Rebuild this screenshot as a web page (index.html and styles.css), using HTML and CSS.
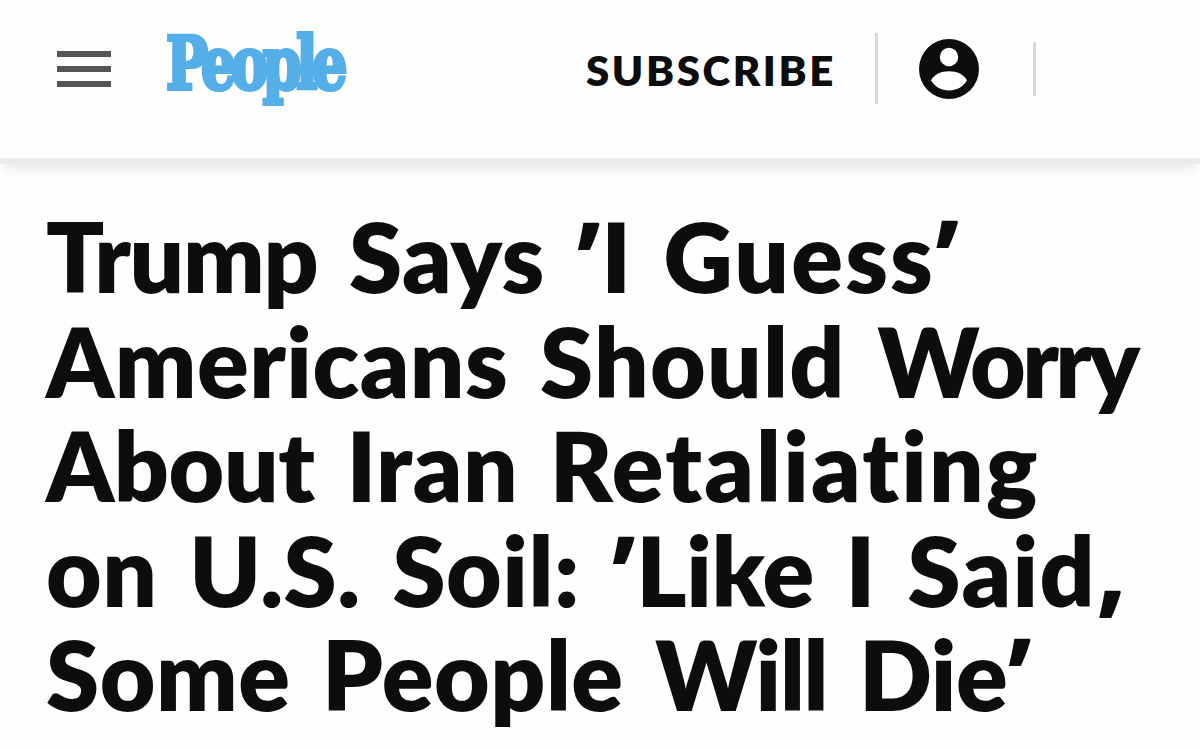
FILE: index.html
```html
<!DOCTYPE html>
<html lang="en">
<head>
  <meta charset="UTF-8">
  <title>People</title>
  <link rel="stylesheet" href="styles.css">
</head>
<body>

  <header class="header">
    <button class="menu" aria-label="Menu">
      <span></span>
      <span></span>
      <span></span>
    </button>
    <a class="logo" href="#">
      <svg width="200" height="110" viewBox="0 0 200 110">
        <text x="3" y="61" textLength="176" lengthAdjust="spacingAndGlyphs">People</text>
      </svg>
    </a>
    <a class="subscribe" href="#">SUBSCRIBE</a>
    <div class="divider"></div>
    <a class="account" href="#" aria-label="Account">
      <svg width="60" height="60" viewBox="0 0 60 60">
        <circle cx="30" cy="30" r="30" fill="#0d0d0d"/>
        <circle cx="30" cy="18" r="9.2" fill="#fff"/>
        <path d="M12 41.5C15 35.5 22 32.3 30 32.3S45 35.5 48 41.5C44 48 37.500 51.500 30 51.500S16 48 12 41.500Z" fill="#fff"/>
      </svg>
    </a>
    <div class="divider short"></div>
  </header>

  <main>
    <h1>
      <span class="line"><span class="tight">Trump</span> Says <i>’</i>I <span class="wider">Guess</span><i>’</i></span>
      <span class="line">Americans <span class="wide">Should</span> <span class="tighter">Worry</span></span>
      <span class="line"><span class="snug">About</span> Iran <span class="wider">Retaliating</span></span>
      <span class="line">on U.S. Soil: <i>’</i><span class="snug">Like</span> I <span class="wide">Said</span><i>,</i></span>
      <span class="line">Some People <span class="tight">Will</span> <span class="snug">Die</span><i>’</i></span>
    </h1>
  </main>

</body>
</html>
```
FILE: styles.css
```css
body {
  margin: 0;
  height: 748px;
  overflow: hidden;
  background-color: #fefefe;
  color: #0d0d0d;
  font-family: Lato, sans-serif;
}

.header {
  display: flex;
  align-items: flex-start;
  height: 158px;
  border-bottom: 6px solid #ebebeb;
  box-shadow: 0 10px 12px -6px rgba(0, 0, 0, 0.1);
}

.menu {
  display: flex;
  flex-direction: column;
  gap: 9px;
  width: 54px;
  margin: 51px 0 0 57px;
  padding: 0;
  border: none;
  background: none;
}

.menu span {
  height: 6px;
  background-color: #555;
}

.logo {
  margin: 28px 0 0 52px;
}

.logo svg {
  display: block;
}

.logo text {
  font-family: "DejaVu Serif", serif;
  font-size: 72px;
  font-weight: bold;
  letter-spacing: -7px;
  fill: #54aee8;
  stroke: #54aee8;
  stroke-width: 4px;
}

.subscribe {
  width: 289px;
  margin: 44px 0 0 223px;
  color: #0d0d0d;
  font-size: 42px;
  font-weight: 800;
  line-height: 52px;
  letter-spacing: 2.6px;
  text-decoration: none;
}

.divider {
  width: 3px;
  height: 71px;
  margin-top: 33px;
  background-color: #d8d8d8;
}

.divider.short {
  height: 54px;
  margin: 42px 0 0 54px;
}

.account {
  margin: 39px 0 0 41px;
}

.account svg {
  display: block;
}

main {
  padding: 40px 0 0 46px;
}

h1 {
  margin: 0;
  font-size: 96px;
  font-weight: 800;
  line-height: 104.5px;
  letter-spacing: 0.5px;
  word-spacing: 9px;
}

.line {
  display: block;
  height: 104.5px;
  white-space: nowrap;
}

/* straight slanted quotes and comma */
h1 i {
  font-family: "Open Sans", sans-serif;
  font-size: 112px;
  font-style: normal;
  font-weight: 700;
  line-height: 0;
  vertical-align: -9px;
}

h1 i:last-child {
  vertical-align: -7px;
}

.line:nth-child(4) i:last-child {
  vertical-align: 3px;
}

.tight {
  letter-spacing: -1.3px;
}

.tighter {
  letter-spacing: -3.5px;
}

.snug {
  letter-spacing: -0.4px;
}

.wide {
  letter-spacing: 1.3px;
}

.wider {
  letter-spacing: 2.2px;
}
```
